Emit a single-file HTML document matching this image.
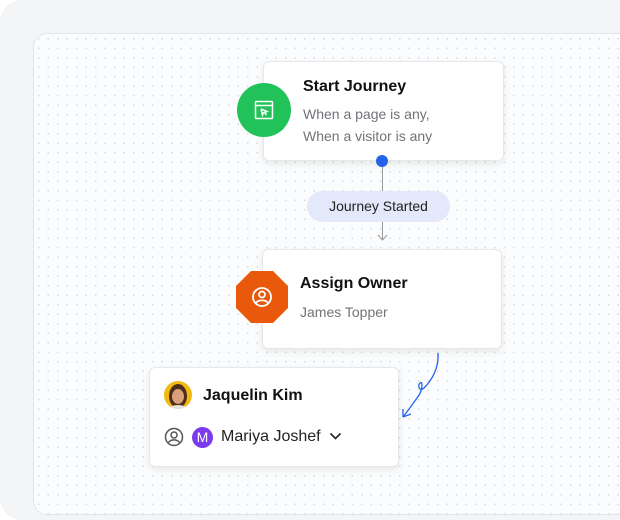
<!DOCTYPE html>
<html><head><style>
body{margin:0;width:620px;height:496px;background:#fff;font-family:"Liberation Sans",sans-serif;overflow:hidden;position:relative}
.outer{position:absolute;left:0;top:0;width:640px;height:520px;background:#f4f5f7;border-radius:22px}
.inner{position:absolute;left:33px;top:33px;width:620px;height:480px;border:1px solid #e3e5e9;border-radius:14px;background-color:#fbfcfd;background-image:radial-gradient(circle,#d5d8dd 0.8px,transparent 1px);background-size:9.5px 9.5px}
.card{position:absolute;background:#fff;border:1px solid #e6e7ea;border-radius:6px;box-shadow:0 3px 8px rgba(0,0,0,.08)}
.t{position:absolute;font-weight:bold;font-size:16px;color:#111;z-index:3}
.s{position:absolute;font-size:14px;color:#707378;z-index:3}
</style></head><body>
<div class="outer"></div>
<div class="inner"></div>
<div class="card" style="left:263px;top:61px;width:239px;height:98px"></div>
<div style="position:absolute;left:237px;top:83px;width:54px;height:54px;border-radius:50%;background:#22c25a;z-index:2"></div>
<svg style="position:absolute;left:254px;top:100px;z-index:3" width="20" height="20" viewBox="0 0 20 20" fill="none" stroke="#fff" stroke-width="1.5"><rect x="1.5" y="1.5" width="17" height="17" rx="1"/><line x1="1.5" y1="5.5" x2="18.5" y2="5.5"/><path d="M7 9l6 2.5-2.5 1 2 2.5M7 9l1.5 6 1-2.5"/></svg>
<div class="t" style="left:303px;top:78px">Start Journey</div>
<div class="s" style="left:303px;top:106px">When a page is any,</div>
<div class="s" style="left:303px;top:128px">When a visitor is any</div>
<div style="position:absolute;left:376px;top:155px;width:12px;height:12px;border-radius:50%;background:#2563eb;z-index:3"></div>
<div style="position:absolute;left:382px;top:166px;width:1px;height:26px;background:#999"></div>
<div style="position:absolute;left:307px;top:191px;width:143px;height:31px;border-radius:16px;background:#e3e8fb;font-size:14px;color:#222;text-align:center;line-height:31px">Journey Started</div>
<div style="position:absolute;left:382px;top:222px;width:1px;height:18px;background:#999"></div>
<svg style="position:absolute;left:377px;top:234px" width="11" height="8"><path d="M1 1l4.5 5L10 1" stroke="#999" fill="none"/></svg>
<div class="card" style="left:262px;top:249px;width:238px;height:98px"></div>
<svg style="position:absolute;left:236px;top:271px;z-index:3" width="52" height="52" viewBox="0 0 52 52"><polygon points="15,0 37,0 52,15 52,37 37,52 15,52 0,37 0,15" fill="#e8590c"/><g fill="none" stroke="#fff" stroke-width="1.8"><circle cx="26" cy="26" r="9"/><circle cx="26" cy="23.5" r="3"/><path d="M20 32c2-3.5 10-3.5 12 0"/></g></svg>
<div class="t" style="left:300px;top:275px">Assign Owner</div>
<div class="s" style="left:300px;top:304px">James Topper</div>
<svg style="position:absolute;left:395px;top:350px" width="50" height="75" viewBox="0 0 50 75" fill="none" stroke="#2563eb" stroke-width="1.3"><path d="M43 3C44 18 37 30 29 38C25 42 22 36 25 33C28 30 28 41 22 48C17 55 12 62 8 67"/><path d="M8 67l0-8M8 67l8-3"/></svg>
<div class="card" style="left:149px;top:367px;width:248px;height:98px"></div>
<div style="position:absolute;left:164px;top:381px;width:28px;height:28px;border-radius:50%;background:#f0b810;overflow:hidden;z-index:3">
<div style="position:absolute;left:5px;top:3px;width:18px;height:24px;border-radius:50%;background:#4a2e1a"></div>
<div style="position:absolute;left:8px;top:8px;width:12px;height:15px;border-radius:50%;background:#d9a07a"></div>
<div style="position:absolute;left:4px;top:24px;width:20px;height:10px;border-radius:50%;background:#e8e2da"></div>
</div>
<div class="t" style="left:203px;top:387px">Jaquelin Kim</div>
<svg style="position:absolute;left:164px;top:427px" width="20" height="20" viewBox="0 0 20 20" fill="none" stroke="#555" stroke-width="1.5"><circle cx="10" cy="10" r="8.5"/><circle cx="10" cy="8" r="3"/><path d="M4.5 15.5c2.5-3.5 8.5-3.5 11 0"/></svg>
<div style="position:absolute;left:192px;top:427px;width:21px;height:21px;border-radius:50%;background:#7c3aed;color:#fff;font-size:14px;text-align:center;line-height:21px">M</div>
<div style="position:absolute;left:221px;top:428px;font-size:16px;color:#222">Mariya Joshef</div>
<svg style="position:absolute;left:329px;top:432px" width="13" height="9"><path d="M1.5 1.5l5 5 5-5" stroke="#222" stroke-width="1.6" fill="none"/></svg>
</body></html>
